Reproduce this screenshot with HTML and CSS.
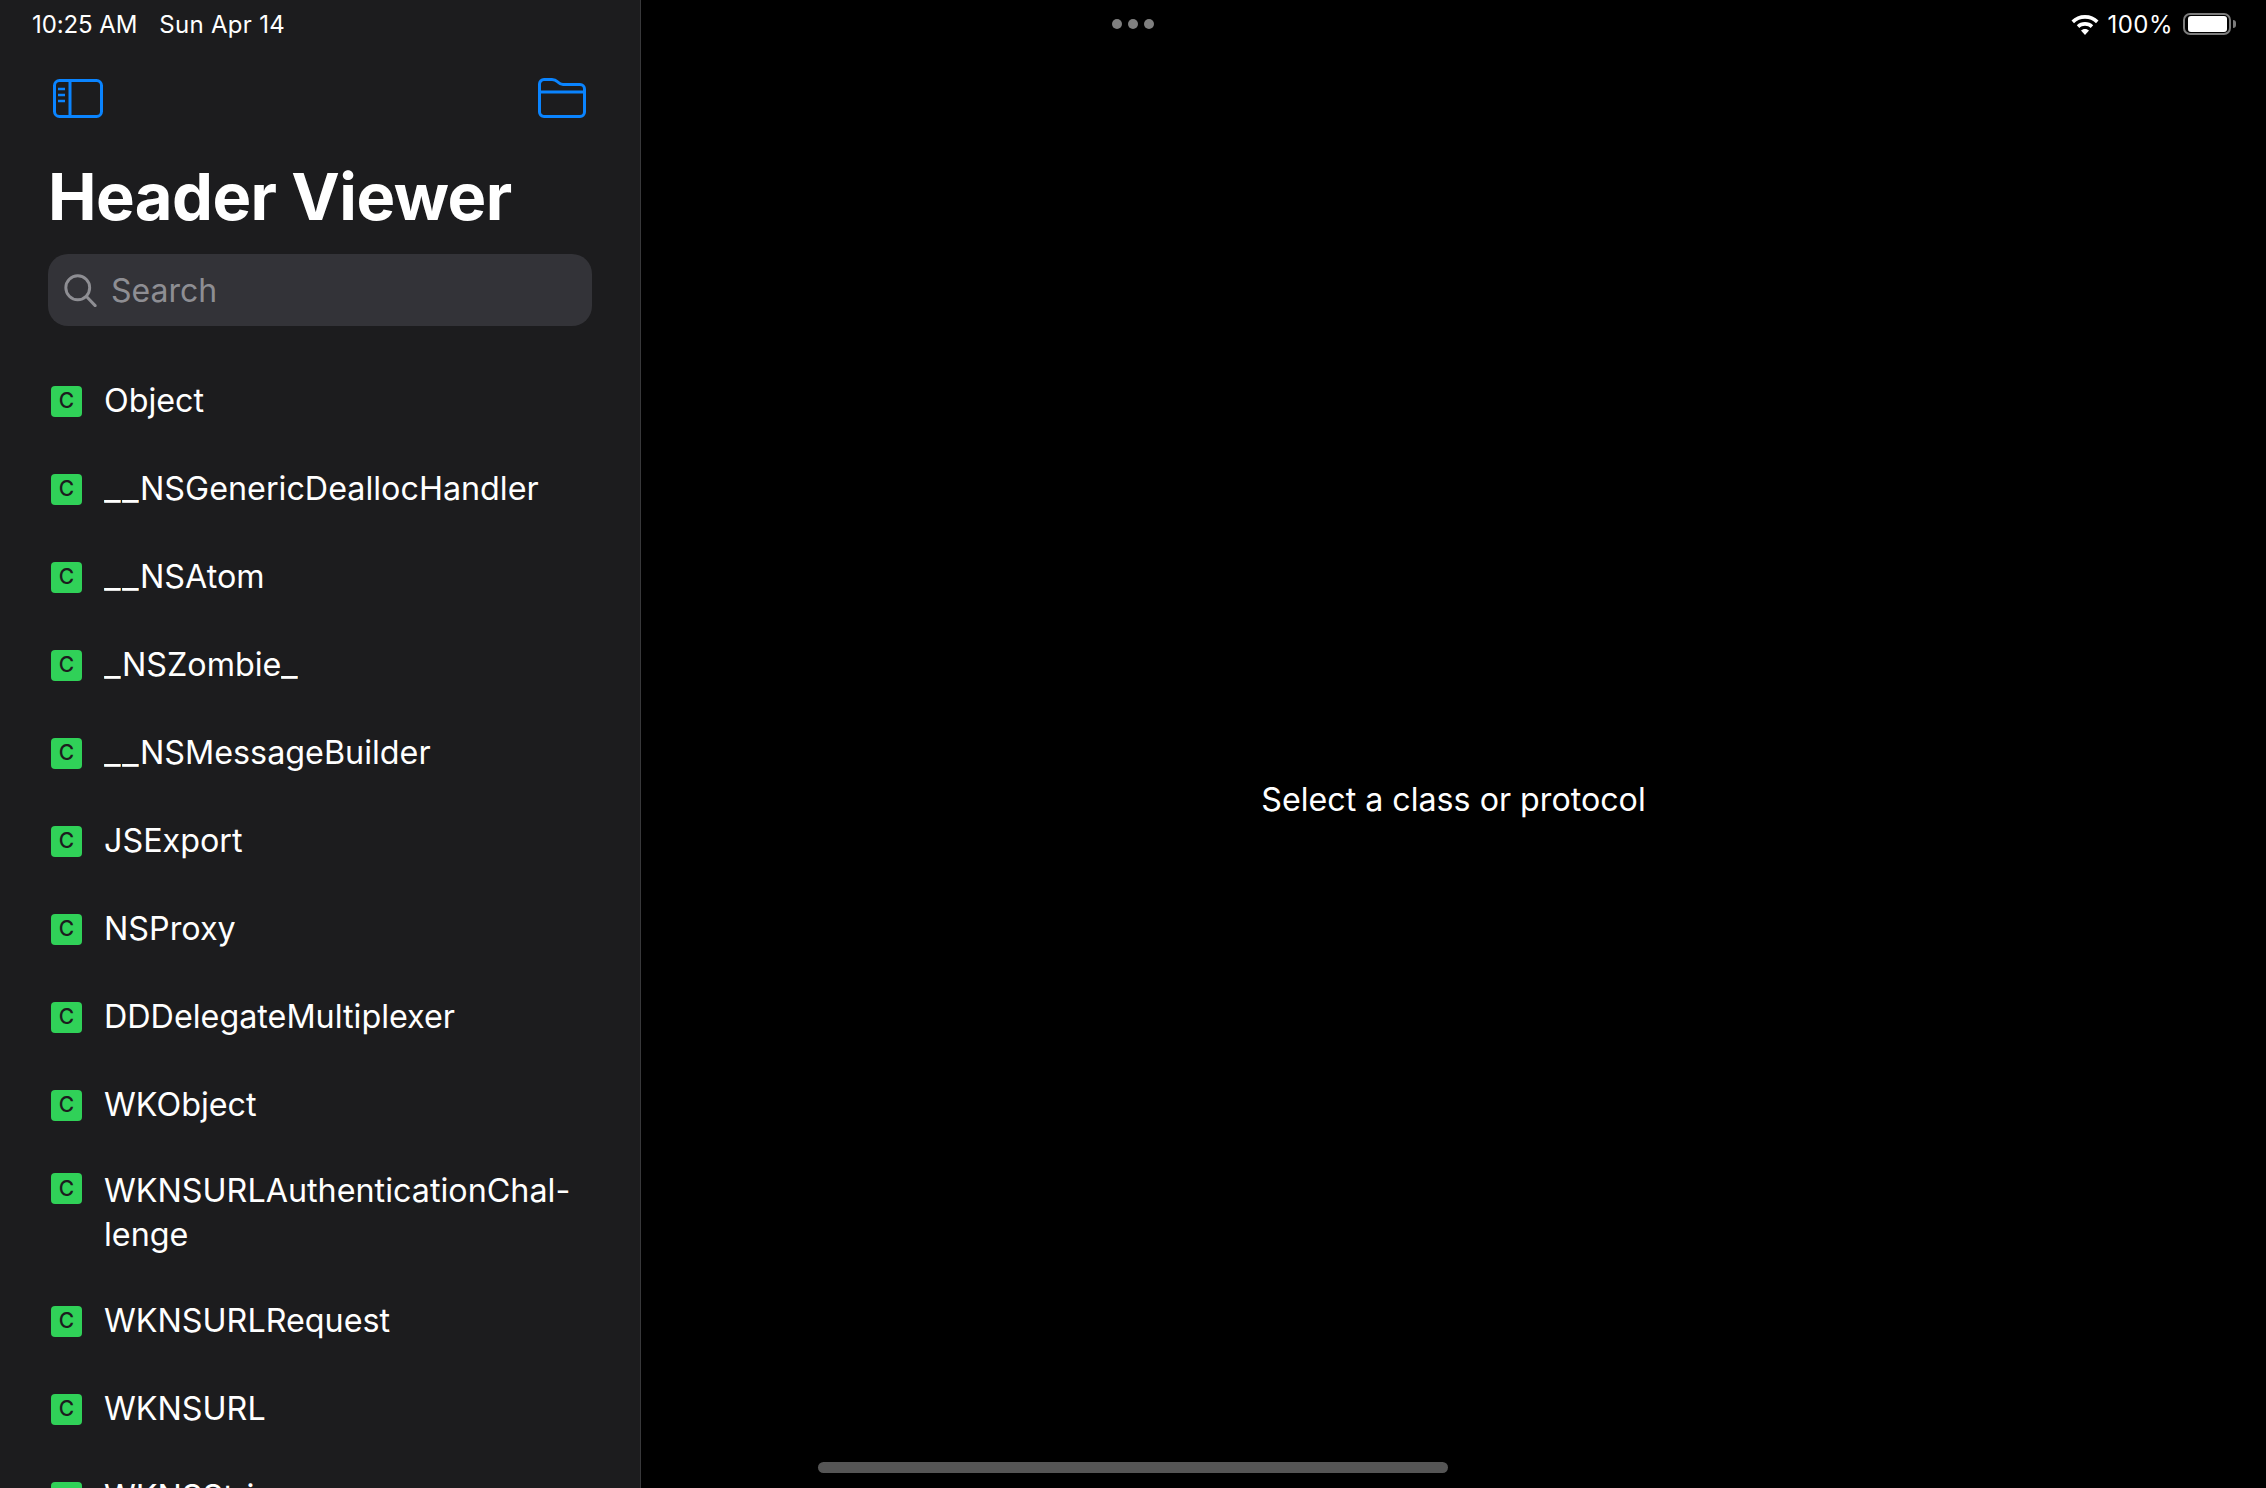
FILE: index.html
```html
<!DOCTYPE html>
<html lang="en">
<head>
  <meta charset="UTF-8">
  <title>Header Viewer</title>
  <link rel="stylesheet" href="styles.css">
</head>
<body>
  <div class="app">
    <aside class="sidebar">
      <div class="status-left">
        <span class="status-time">10:25 AM</span>
        <span class="status-date">Sun Apr 14</span>
      </div>
      <div class="toolbar">
        <svg class="tool-icon" width="50" height="40" viewBox="0 0 50 40" fill="none" stroke="#0a84ff" stroke-width="3">
          <rect x="1.500" y="2.500" width="47" height="36" rx="5"/>
          <path d="M17 2.500v36"/>
          <path d="M5 11h7M5 17h7M5 23h7" stroke-width="2.500"/>
        </svg>
        <svg class="tool-icon" width="48" height="40" viewBox="0 0 48 40" fill="none" stroke="#0a84ff" stroke-width="3">
          <path d="M1.500 6a4.500 4.500 0 0 1 4.500-4.500h8c3 0 4 .8 5.500 2.300S22 6.500 25 6.500h17a4.500 4.500 0 0 1 4.500 4.500v23a4.500 4.500 0 0 1-4.500 4.500H6A4.500 4.500 0 0 1 1.500 34z"/>
          <path d="M1.500 14h45"/>
        </svg>
      </div>
      <h1 class="title">Header Viewer</h1>
      <div class="search">
        <svg width="33" height="33" viewBox="0 0 36 36" fill="none" stroke="#8e8e93" stroke-width="3.200">
          <circle cx="15" cy="15" r="13"/>
          <path d="M24.500 24.500L34 34.500" stroke-linecap="round"/>
        </svg>
        <span>Search</span>
      </div>
      <ul class="class-list">
        <li class="row"><span class="badge">C</span><span>Object</span></li>
        <li class="row"><span class="badge">C</span><span><span class="us">_</span><span class="us">_</span>NSGenericDeallocHandler</span></li>
        <li class="row"><span class="badge">C</span><span><span class="us">_</span><span class="us">_</span>NSAtom</span></li>
        <li class="row"><span class="badge">C</span><span><span class="us">_</span>NSZombie<span class="us">_</span></span></li>
        <li class="row"><span class="badge">C</span><span><span class="us">_</span><span class="us">_</span>NSMessageBuilder</span></li>
        <li class="row"><span class="badge">C</span><span>JSExport</span></li>
        <li class="row"><span class="badge">C</span><span>NSProxy</span></li>
        <li class="row"><span class="badge">C</span><span>DDDelegateMultiplexer</span></li>
        <li class="row"><span class="badge">C</span><span>WKObject</span></li>
        <li class="row row-tall"><span class="badge">C</span><span>WKNSURLAuthenticationChal-<br>lenge</span></li>
        <li class="row"><span class="badge">C</span><span>WKNSURLRequest</span></li>
        <li class="row"><span class="badge">C</span><span>WKNSURL</span></li>
        <li class="row"><span class="badge">C</span><span>WKNSString</span></li>
      </ul>
    </aside>
    <main class="detail">
      <div class="status-right">
        <svg width="30" height="24" viewBox="0 0 30 24" fill="#fff">
          <path d="M15 3C9.500 3 5 5 1.500 8.500L4 11.200C7 8.300 10.700 6.800 15 6.800s8 1.500 11 4.400l2.500-2.700C25 5 20.500 3 15 3z"/>
          <path d="M15 10c-3.300 0-6 1.200-8.200 3.200l2.500 2.700c1.500-1.400 3.400-2.200 5.700-2.200s4.200.8 5.700 2.200l2.500-2.700C21 11.200 18.300 10 15 10z"/>
          <path d="M15 17c-1.600 0-3 .6-4 1.600l4 4.400 4-4.400c-1-1-2.400-1.600-4-1.600z"/>
        </svg>
        <span class="battery-pct">100%</span>
        <div class="battery"><div class="battery-fill"></div></div>
        <div class="battery-cap"></div>
      </div>
      <div class="placeholder">Select a class or protocol</div>
    </main>
  </div>
  <div class="dots"><i></i><i></i><i></i></div>
  <div class="home-bar"></div>
</body>
</html>
```

FILE: styles.css
```css
* {
  box-sizing: border-box;
}
html, body {
  margin: 0;
  height: 100%;
  overflow: hidden;
  background: #000;
}
body {
  font-family: Inter, "Liberation Sans", sans-serif;
  color: #fff;
}
.app {
  display: flex;
  height: 1488px;
}

/* sidebar */
.sidebar {
  width: 641px;
  flex: none;
  padding: 0 48px;
  background: #1c1c1e;
  border-right: 1px solid #38383a;
  overflow: hidden;
}
.status-left {
  display: flex;
  gap: 22px;
  height: 48px;
  margin-left: -16px;
  align-items: center;
  font-size: 24px;
}
.status-time {
  letter-spacing: -0.1px;
}
.status-date {
  letter-spacing: 0.3px;
}
.toolbar {
  display: flex;
  justify-content: space-between;
  align-items: center;
  height: 40px;
  margin-top: 30px;
  padding: 0 6px 0 5px;
}
.tool-icon {
  display: block;
}
.title {
  margin: 40px 0 0;
  height: 78px;
  font-size: 65px;
  line-height: 78px;
  font-weight: 700;
  letter-spacing: -0.55px;
}
.search {
  display: flex;
  align-items: center;
  gap: 14px;
  width: 544px;
  height: 72px;
  margin-top: 18px;
  padding: 0 16px;
  border-radius: 20px;
  background: #333338;
  color: #8e8e93;
  font-size: 32px;
}
.class-list {
  list-style: none;
  margin: 0;
  padding: 0;
  margin-top: 31px;
}
.row {
  display: flex;
  align-items: center;
  gap: 22px;
  height: 88px;
  font-size: 32.300px;
  line-height: 44px;
}
.row-tall {
  height: 128px;
  align-items: flex-start;
  padding-top: 20px;
}
/* underscores run wider in the original font */
.us {
  display: inline-block;
  width: 18px;
  transform: scaleX(1.130);
  transform-origin: left;
}
.badge {
  display: flex;
  align-items: center;
  justify-content: center;
  flex: none;
  width: 31px;
  height: 31px;
  margin-left: 3px;
  border-radius: 4px;
  background: #30d158;
  color: #1c1c1e;
  font-size: 21px;
  font-weight: 500;
}
.row-tall .badge {
  margin-top: 4px;
}

/* detail pane */
.detail {
  flex: 1;
  display: flex;
  flex-direction: column;
}
.status-right {
  display: flex;
  align-items: center;
  justify-content: flex-end;
  gap: 7px;
  height: 48px;
  padding-right: 30px;
  font-size: 24px;
}
.battery-pct {
  letter-spacing: 0.5px;
}
.battery {
  width: 48px;
  height: 22px;
  margin-left: 3px;
  padding: 1px 2.500px;
  border: 2px solid #7c7c7c;
  border-radius: 7px;
}
.battery-fill {
  height: 100%;
  border-radius: 3px;
  background: #fff;
}
.battery-cap {
  width: 3px;
  height: 8px;
  margin-left: -5px;
  border-radius: 0 3px 3px 0;
  background: #7c7c7c;
}
.placeholder {
  flex: 1;
  display: flex;
  align-items: center;
  justify-content: center;
  padding-top: 62px;
  font-size: 32.200px;
}

/* things floating over the panes */
.dots {
  position: absolute;
  top: 19px;
  left: 1112px;
  display: flex;
  gap: 6px;
}
.dots i {
  width: 10px;
  height: 10px;
  border-radius: 50%;
  background: #7f7f7f;
}
.home-bar {
  position: absolute;
  top: 1462px;
  left: 818px;
  width: 630px;
  height: 11px;
  border-radius: 6px;
  background: #555;
}
```
